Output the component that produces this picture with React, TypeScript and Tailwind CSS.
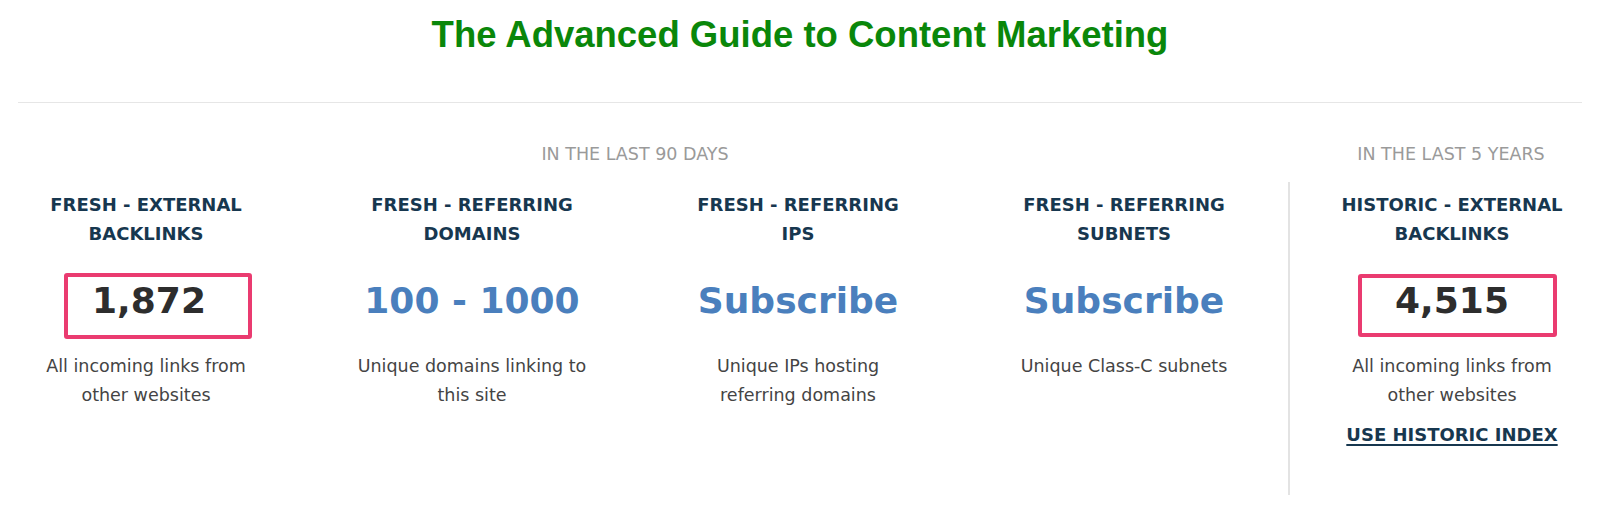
import React from "react";

type Col = {
  title: React.ReactNode;
  value: string;
  valueClass: string;
  desc: React.ReactNode;
  shift?: number;
  box?: { left: number; width: number; top: number; height: number };
};

const cols: Col[] = [
  {
    title: (
      <>
        FRESH - EXTERNAL
        <br />
        BACKLINKS
      </>
    ),
    value: "1,872",
    valueClass: "text-[#2d2d2d]",
    desc: (
      <>
        All incoming links from
        <br />
        other websites
      </>
    ),
    shift: 3,
    box: { left: 46, width: 188, top: -3, height: 66 },
  },
  {
    title: (
      <>
        FRESH - REFERRING
        <br />
        DOMAINS
      </>
    ),
    value: "100 - 1000",
    valueClass: "text-[#4a7fbd]",
    desc: (
      <>
        Unique domains linking to
        <br />
        this site
      </>
    ),
  },
  {
    title: (
      <>
        FRESH - REFERRING
        <br />
        IPS
      </>
    ),
    value: "Subscribe",
    valueClass: "text-[#4a7fbd]",
    desc: (
      <>
        Unique IPs hosting
        <br />
        referring domains
      </>
    ),
  },
  {
    title: (
      <>
        FRESH - REFERRING
        <br />
        SUBNETS
      </>
    ),
    value: "Subscribe",
    valueClass: "text-[#4a7fbd]",
    desc: <>Unique Class-C subnets</>,
  },
];

function Column({ c, children }: { c: Col; children?: React.ReactNode }) {
  return (
    <div className="flex flex-col items-stretch text-center">
      <div className="text-[18px] font-bold leading-[29px] text-[#17374f] whitespace-nowrap">
        {c.title}
      </div>
      <div className="relative mt-[28px]">
        <div
          className={`text-[36px] font-bold leading-[50px] whitespace-nowrap ${c.valueClass}`}
          style={c.shift ? { paddingLeft: c.shift * 2 } : undefined}
        >
          {c.value}
        </div>
        {c.box && (
          <div
            className="absolute border-[4px] border-[#ea3b70] rounded-[3px]"
            style={{
              left: c.box.left,
              width: c.box.width,
              top: c.box.top,
              height: c.box.height,
            }}
          />
        )}
      </div>
      <div className="mt-[26px] text-[17.5px] leading-[29px] text-[#444444] whitespace-nowrap">
        {c.desc}
      </div>
      {children}
    </div>
  );
}

export default function App() {
  const historic: Col = {
    title: (
      <>
        HISTORIC - EXTERNAL
        <br />
        BACKLINKS
      </>
    ),
    value: "4,515",
    valueClass: "text-[#2d2d2d]",
    desc: (
      <>
        All incoming links from
        <br />
        other websites
      </>
    ),
    box: { left: 34, width: 199, top: -2, height: 63 },
  };

  return (
    <div
      className="w-[1600px] h-[510px] bg-white overflow-hidden"
      style={{ fontFamily: '"DejaVu Sans", Verdana, sans-serif' }}
    >
      <h1
        className="pt-[17px] text-center text-[36.5px] leading-[36px] font-bold text-[#0a870a]"
        style={{ fontFamily: '"Liberation Sans", Arial, sans-serif' }}
      >
        The Advanced Guide to Content Marketing
      </h1>
      <div className="mx-[18px] mt-[49px] border-t border-[#e6e6e6]" />
      <div className="mx-[18px] mt-[37px] flex">
        <div className="w-[1234px] shrink-0">
          <div className="text-center text-[17.5px] leading-[28px] text-[#9a9a9a]">
            IN THE LAST 90 DAYS
          </div>
          <div className="mt-[14px] pt-[8px] grid grid-cols-[256px_256px_256px_256px] gap-x-[70px]">
            {cols.map((c, i) => (
              <Column key={i} c={c} />
            ))}
          </div>
        </div>
        <div className="ml-[36px] shrink-0">
          <div className="pl-[35px] w-[291px] text-center text-[17.5px] leading-[28px] text-[#9a9a9a] whitespace-nowrap">
            IN THE LAST 5 YEARS
          </div>
          <div className="mt-[14px] pt-[8px] pb-[46px] border-l-2 border-[#e3e3e3] pl-[34px] w-[292px]">
            <div className="w-[256px]">
              <Column c={historic}>
                <div className="mt-[10px] text-[18px] font-bold leading-[29px] text-[#17374f] underline underline-offset-[3px] decoration-[2px] whitespace-nowrap">
                  USE HISTORIC INDEX
                </div>
              </Column>
            </div>
          </div>
        </div>
      </div>
    </div>
  );
}
